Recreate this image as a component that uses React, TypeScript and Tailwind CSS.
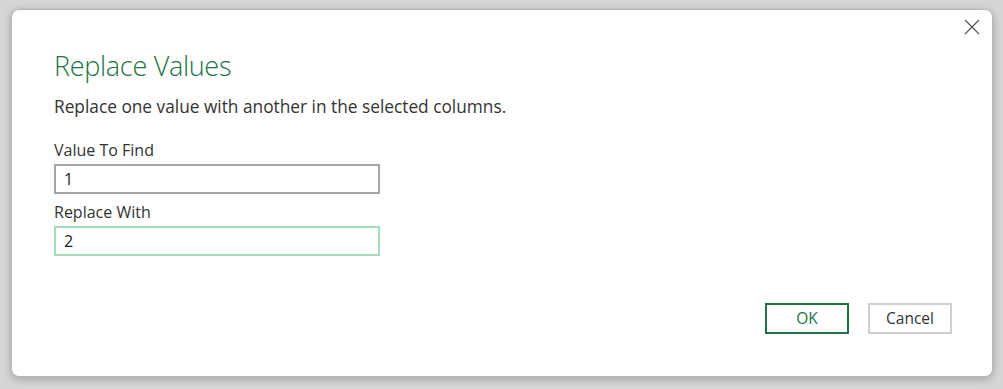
import React from "react";

const App = () => {
  return (
    <div
      className="w-[1003px] h-[389px] bg-[#d6d6d6] pt-[9px] pl-[11px]"
      style={{ fontFamily: '"Open Sans", "Noto Sans", sans-serif' }}
    >
      <div className="relative w-[982px] h-[368px] bg-white rounded-[8px] border border-[#b8b8b8] shadow-[0_2px_8px_rgba(0,0,0,0.25)] pl-[42px] pr-[40px] pt-[39px]">
        {/* Close */}
        <button className="absolute right-[12px] top-[9px] w-[16px] h-[16px] text-[#555]">
          <svg viewBox="0 0 16 16" width="16" height="16" fill="none" stroke="currentColor" strokeWidth="1.2">
            <path d="M1 1 L15 15 M15 1 L1 15" />
          </svg>
        </button>

        <h1 className="text-[27px] font-light text-[#217346] leading-[34px] tracking-[-0.3px]">Replace Values</h1>
        <p className="mt-[12px] text-[17.3px] text-[#333] leading-[24px]">
          Replace one value with another in the selected columns.
        </p>

        <div className="mt-[21px] text-[16px] text-[#333] leading-[20px]">Value To Find</div>
        <div className="mt-[4px] w-[326px] h-[30px] border-2 border-[#a6a6a6] flex items-center pl-[8px] text-[16px] text-[#222]">
          1
        </div>

        <div className="mt-[8px] text-[16px] text-[#333] leading-[20px]">Replace With</div>
        <div className="mt-[4px] w-[326px] h-[30px] border-2 border-[#a8dcbc] flex items-center pl-[8px] text-[16px] text-[#222]">
          2
        </div>

        <div className="absolute right-[40px] bottom-[42px] flex gap-[19px]">
          <button className="w-[84px] h-[31px] border-2 border-[#217346] text-[15.5px] text-[#217346]">OK</button>
          <button className="w-[84px] h-[31px] border-2 border-[#d0d0d0] text-[15.5px] text-[#333]">Cancel</button>
        </div>
      </div>
    </div>
  );
};

export default App;
